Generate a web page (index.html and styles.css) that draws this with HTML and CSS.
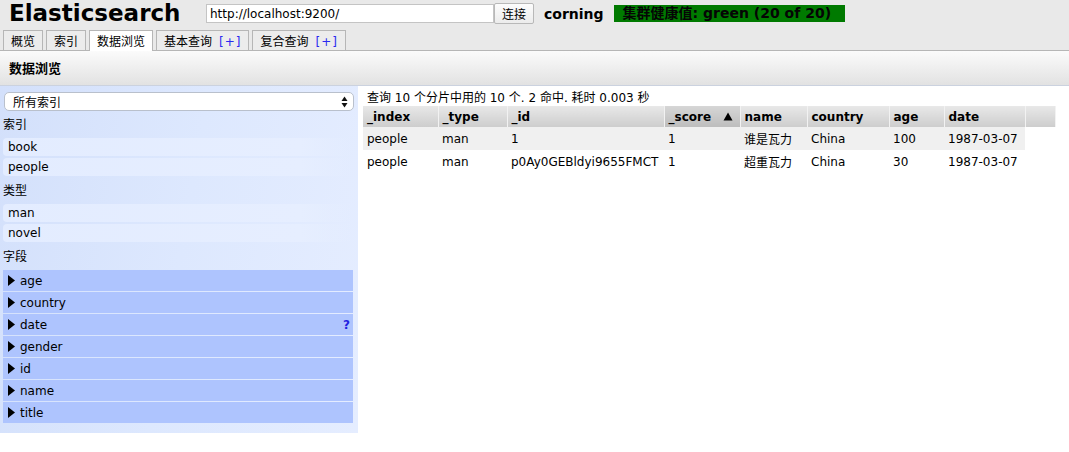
FILE: index.html
```html
<!DOCTYPE html>
<html lang="zh-CN">
<head>
<meta charset="utf-8">
<title>Elasticsearch</title>
<link rel="stylesheet" href="styles.css">
</head>
<body>
<div class="top">
  <div class="hdr">
    <h1 class="logo">Elasticsearch</h1>
    <input class="url" type="text" value="http://localhost:9200/">
    <button class="connect">连接</button>
    <span class="cluster">corning</span>
    <span class="health">集群健康值: green (20 of 20)</span>
  </div>
  <div class="tabs">
    <div class="tab">概览</div>
    <div class="tab">索引</div>
    <div class="tab active">数据浏览</div>
    <div class="tab">基本查询<span class="plus">[+]</span></div>
    <div class="tab">复合查询<span class="plus">[+]</span></div>
  </div>
</div>
<div class="page-head">数据浏览</div>
<div class="main">
  <aside class="side">
    <div class="sel">
      <span>所有索引</span>
      <svg class="updown" width="7" height="12" viewBox="0 0 7 12"><polygon points="3.5,0.5 6.5,5 0.5,5" fill="#111"/><polygon points="0.5,7 6.5,7 3.5,11.5" fill="#111"/></svg>
    </div>
    <div class="label">索引</div>
    <div class="item">book</div>
    <div class="item">people</div>
    <div class="label">类型</div>
    <div class="item">man</div>
    <div class="item">novel</div>
    <div class="label">字段</div>
    <div class="field"><svg class="tri" width="7" height="11" viewBox="0 0 7 11"><polygon points="0,0 7,5.5 0,11" fill="#000"/></svg><span>age</span></div>
    <div class="field"><svg class="tri" width="7" height="11" viewBox="0 0 7 11"><polygon points="0,0 7,5.5 0,11" fill="#000"/></svg><span>country</span></div>
    <div class="field"><svg class="tri" width="7" height="11" viewBox="0 0 7 11"><polygon points="0,0 7,5.5 0,11" fill="#000"/></svg><span>date</span><b class="q">?</b></div>
    <div class="field"><svg class="tri" width="7" height="11" viewBox="0 0 7 11"><polygon points="0,0 7,5.5 0,11" fill="#000"/></svg><span>gender</span></div>
    <div class="field"><svg class="tri" width="7" height="11" viewBox="0 0 7 11"><polygon points="0,0 7,5.5 0,11" fill="#000"/></svg><span>id</span></div>
    <div class="field"><svg class="tri" width="7" height="11" viewBox="0 0 7 11"><polygon points="0,0 7,5.5 0,11" fill="#000"/></svg><span>name</span></div>
    <div class="field"><svg class="tri" width="7" height="11" viewBox="0 0 7 11"><polygon points="0,0 7,5.5 0,11" fill="#000"/></svg><span>title</span></div>
  </aside>
  <section class="results">
    <div class="summary">查询 10 个分片中用的 10 个. 2 命中. 耗时 0.003 秒</div>
    <table class="grid">
      <colgroup>
        <col class="c-index"><col class="c-type"><col class="c-id"><col class="c-score"><col class="c-name"><col class="c-country"><col class="c-age"><col class="c-date"><col class="c-blank">
      </colgroup>
      <thead>
        <tr>
          <th>_index</th><th>_type</th><th>_id</th>
          <th class="sorted">_score<svg class="sort" width="10" height="9" viewBox="0 0 10 9"><polygon points="5,0.5 9.5,8.5 0.5,8.5" fill="#000"/></svg></th>
          <th>name</th><th>country</th><th>age</th><th>date</th><th></th>
        </tr>
      </thead>
      <tbody>
        <tr class="odd">
          <td>people</td><td>man</td><td>1</td><td>1</td><td>谁是瓦力</td><td>China</td><td>100</td><td>1987-03-07</td><td class="blank"></td>
        </tr>
        <tr>
          <td>people</td><td>man</td><td>p0Ay0GEBldyi9655FMCT</td><td>1</td><td>超重瓦力</td><td>China</td><td>30</td><td>1987-03-07</td><td class="blank"></td>
        </tr>
      </tbody>
    </table>
  </section>
</div>
</body>
</html>
```

FILE: styles.css
```css
* { box-sizing: border-box; }

body {
  margin: 0;
  background: #fff;
  color: #000;
  font-family: "DejaVu Sans", "Noto Sans CJK SC", sans-serif;
  font-size: 12px;
}

.top {
  background: #e9e9e9;
}

.hdr {
  display: flex;
  align-items: center;
  height: 30px;
  padding: 3px 0 6px 9px;
}

.logo {
  margin: 0;
  width: 197px;
  font-size: 23px;
  font-weight: bold;
  line-height: 21px;
  white-space: nowrap;
}

.url {
  width: 288px;
  height: 19px;
  margin: 0;
  padding: 0 3px;
  border: 1px solid #c4c4c4;
  background: #fff;
  font-family: "DejaVu Sans", "Noto Sans CJK SC", sans-serif;
  font-size: 12px;
  color: #000;
  outline: none;
}

.connect {
  width: 40px;
  height: 21px;
  margin: 0;
  padding: 0;
  border: 1px solid #b8b8b8;
  border-radius: 2px;
  background: linear-gradient(#fcfcfc, #ececec);
  font-family: "Noto Sans CJK SC", sans-serif;
  font-size: 12px;
  color: #000;
}

.cluster {
  margin-left: 10px;
  font-size: 14px;
  font-weight: bold;
}

.health {
  margin-left: 10px;
  width: 231px;
  height: 17px;
  padding: 0 9px;
  background: #007a00;
  color: #050505;
  font-size: 14px;
  font-weight: bold;
  line-height: 17px;
  white-space: nowrap;
}

.tabs {
  display: flex;
  align-items: flex-end;
  gap: 3px;
  height: 21px;
  padding-left: 3px;
  border-bottom: 1px solid #b6b6b6;
}

.tab {
  height: 20px;
  padding: 2px 7px 0;
  border: 1px solid #b6b6b6;
  border-bottom: 0;
  background: #ececec;
  line-height: 18px;
  font-size: 12px;
  white-space: nowrap;
}

.tab.active {
  height: 21px;
  margin-bottom: -1px;
  background: #fff;
}

.plus {
  margin-left: 7px;
  color: #2a2af0;
  letter-spacing: 1px;
}

.page-head {
  height: 35px;
  padding-left: 9px;
  background: linear-gradient(#fbfbfb, #e2e2e2);
  border-bottom: 1px solid #cbd2df;
  font-size: 13px;
  font-weight: bold;
  line-height: 35px;
}

.main {
  display: flex;
  align-items: flex-start;
}

.side {
  flex: none;
  display: flex;
  flex-direction: column;
  width: 358px;
  padding: 6px 5px 9px 3px;
  background: linear-gradient(100deg, #d3e0fb 0%, #dde8fe 50%, #e5edff 100%);
}

.sel {
  display: flex;
  align-items: center;
  justify-content: space-between;
  height: 19px;
  margin: 0 -1px 1px 1px;
  padding: 0 5px 0 8px;
  background: #fff;
  border: 1px solid #b9c0cc;
  border-radius: 5px;
  font-family: "Noto Sans CJK SC", sans-serif;
  font-size: 12px;
  line-height: 17px;
}

.updown {
  display: block;
}

.label {
  height: 20px;
  margin: 3px 0;
  line-height: 21px;
  font-size: 12px;
}

.item {
  height: 18px;
  margin-bottom: 2px;
  padding-left: 5px;
  background: linear-gradient(90deg, #e3ecff 0%, #e6eeff 85%, rgba(230, 238, 255, 0) 100%);
  border-radius: 4px;
  line-height: 19px;
}

.field {
  display: flex;
  align-items: center;
  height: 21px;
  margin-bottom: 1px;
  padding: 0 3px 0 5px;
  background: #aec4fe;
}

.tri {
  display: block;
  margin-right: 5px;
}

.field span {
  flex: 1;
}

.q {
  color: #2222e0;
  font-size: 12px;
  font-weight: bold;
}

.results {
  flex: 1;
  padding: 4px 0 0 5px;
}

.summary {
  height: 16px;
  padding-left: 4px;
  line-height: 16px;
  white-space: nowrap;
}

.grid {
  table-layout: fixed;
  border-collapse: collapse;
  width: 692px;
}

.c-index { width: 75px; }
.c-type { width: 69px; }
.c-id { width: 157px; }
.c-score { width: 76px; }
.c-name { width: 67px; }
.c-country { width: 82px; }
.c-age { width: 55px; }
.c-date { width: 81px; }
.c-blank { width: 30px; }

.grid th {
  height: 21px;
  padding: 0 0 0 4px;
  background: linear-gradient(#e8e8e8, #cdcdcd);
  border-right: 1px solid #f2f2f2;
  text-align: left;
  font-weight: bold;
  white-space: nowrap;
}

.grid th.sorted {
  background: linear-gradient(#d6d6d6, #bdbdbd);
}

.sort {
  margin-left: 12px;
  vertical-align: 0;
}

.grid td {
  height: 23px;
  padding: 0 0 0 4px;
  white-space: nowrap;
  overflow: hidden;
}

.grid tr.odd td {
  background: #f0f0f0;
}

.grid tr.odd td.blank {
  background: transparent;
}
```
